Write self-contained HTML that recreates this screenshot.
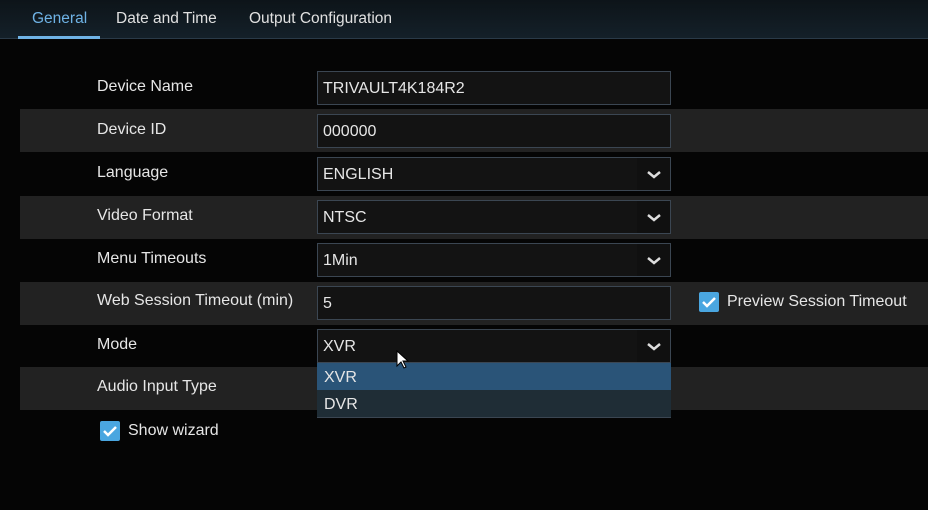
<!DOCTYPE html><html><head><style>
body{margin:0;width:928px;height:510px;background:#050505;font-family:"Liberation Sans",sans-serif;color:#e6e6e6;position:relative;overflow:hidden}
.tabs{position:absolute;left:0;top:0;width:928px;height:38px;background:linear-gradient(#0d1419,#142029);border-bottom:1px solid #2a3a48}
.tab{position:absolute;top:10px;font-size:15.5px;color:#e0e0e0}
.ul{position:absolute;left:18px;top:36px;width:82px;height:3px;background:#6fb3e6}
.row{position:absolute;left:20px;width:908px;height:43px}
.g{background:#222}
.lab{position:absolute;left:97px;font-size:16px}
.in{position:absolute;left:317px;width:352px;height:32px;background:#131313;border:1px solid #3b4652;font-size:16px;line-height:34px;box-sizing:content-box}
.in span{padding-left:5px}
.chev{position:absolute;right:0;top:0;width:33px;height:32px;background:#101010}
.chk{position:absolute;width:20px;height:20px;background:#4aa6e0;border-radius:2px}
.opt{position:absolute;left:317px;width:354px;height:27px;font-size:16px;line-height:29px}
</style></head><body>
<div class="tabs"><span class="tab" style="left:32px;color:#6fb3e6">General</span><span class="tab" style="left:116px">Date and Time</span><span class="tab" style="left:249px">Output Configuration</span><div class="ul"></div></div>
<div class="row g" style="top:109px"></div>
<div class="row g" style="top:196px"></div>
<div class="row g" style="top:282px"></div>
<div class="row g" style="top:367px"></div>
<div class="lab" style="top:78px">Device Name</div>
<div class="lab" style="top:121px">Device ID</div>
<div class="lab" style="top:164px">Language</div>
<div class="lab" style="top:207px">Video Format</div>
<div class="lab" style="top:250px">Menu Timeouts</div>
<div class="lab" style="top:292px">Web Session Timeout (min)</div>
<div class="lab" style="top:336px">Mode</div>
<div class="lab" style="top:378px">Audio Input Type</div>
<div class="in" style="top:71px"><span>TRIVAULT4K184R2</span></div>
<div class="in" style="top:114px"><span>000000</span></div>
<div class="in" style="top:157px"><span>ENGLISH</span><div class="chev"><svg width="33" height="32"><path d="M11 14l6 5 6-5" stroke="#ddd" stroke-width="2.5" fill="none"/></svg></div></div>
<div class="in" style="top:200px"><span>NTSC</span><div class="chev"><svg width="33" height="32"><path d="M11 14l6 5 6-5" stroke="#ddd" stroke-width="2.5" fill="none"/></svg></div></div>
<div class="in" style="top:243px"><span>1Min</span><div class="chev"><svg width="33" height="32"><path d="M11 14l6 5 6-5" stroke="#ddd" stroke-width="2.5" fill="none"/></svg></div></div>
<div class="in" style="top:286px"><span>5</span></div>
<div class="in" style="top:329px"><span>XVR</span><div class="chev"><svg width="33" height="32"><path d="M11 14l6 5 6-5" stroke="#ddd" stroke-width="2.5" fill="none"/></svg></div></div>
<div class="opt" style="top:363px;background:#2a5478"><span style="padding-left:7px">XVR</span></div>
<div class="opt" style="top:390px;background:#1f2d36;border-bottom:1px solid #3b4652"><span style="padding-left:7px">DVR</span></div>
<svg style="position:absolute;left:396px;top:350px" width="14" height="20"><path d="M1 1v15l4-4 3 6 2-1-3-6h5z" fill="#fff" stroke="#000" stroke-width="1"/></svg>
<div class="chk" style="left:699px;top:292px"><svg width="20" height="20"><path d="M4 10l4 4 8-8" stroke="#fff" stroke-width="2.5" fill="none"/></svg></div>
<div class="lab" style="left:727px;top:293px">Preview Session Timeout</div>
<div class="chk" style="left:100px;top:421px"><svg width="20" height="20"><path d="M4 10l4 4 8-8" stroke="#fff" stroke-width="2.5" fill="none"/></svg></div>
<div class="lab" style="left:128px;top:422px">Show wizard</div>
</body></html>
